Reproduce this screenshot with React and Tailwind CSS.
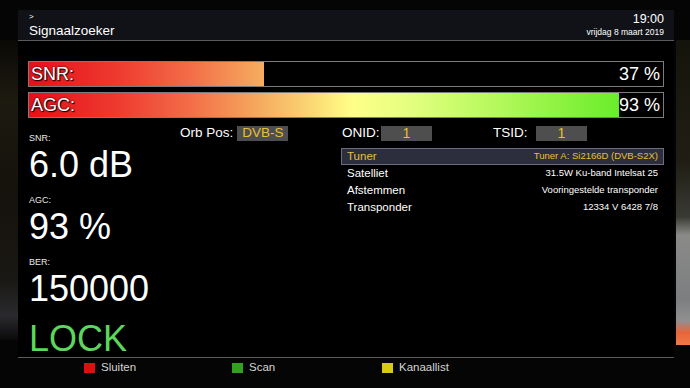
import React from "react";

const font = { fontFamily: '"Liberation Sans", Arial, sans-serif' };

function Bar({ label, value }) {
  return (
    <div className="relative h-[26px] w-[636px] border border-[#7c7c7c] bg-black">
      <div className="h-full overflow-hidden" style={{ width: `${value}%` }}>
        <div className="h-full w-[634px] bg-[linear-gradient(to_right,#e60f1a_0%,#ee3a30_14%,#f37048_26%,#f6ae60_37%,#fbd472_44%,#ffff88_51%,#e4ff80_60%,#b0f858_75%,#7cf036_88%,#52e81c_100%)]" />
      </div>
      <span className="absolute left-[2px] top-0 text-[18px] leading-[24px] text-white [text-shadow:0_0_2px_#000,1px_1px_1px_#000]">
        {label}
      </span>
      <span className="absolute right-[3px] top-0 text-[18px] leading-[24px] text-white [text-shadow:0_0_2px_#000,1px_1px_1px_#000]">
        {value} %
      </span>
    </div>
  );
}

function Stat({ label, value }) {
  return (
    <div className="flex flex-col">
      <div className="text-[9px] leading-[14px] text-[#e8e8e8]">{label}</div>
      <div className="text-[36px] leading-[40px] text-white">{value}</div>
    </div>
  );
}

function Row({ label, value, active }) {
  return (
    <div
      className={
        "flex h-[17px] items-center justify-between px-[5px] " +
        (active ? "border border-[#6c6e80] bg-[#2c2e3e]" : "border border-transparent")
      }
    >
      <span className={"text-[11.5px] " + (active ? "text-[#e8c030]" : "text-white")}>{label}</span>
      <span className={"text-[9.5px] " + (active ? "text-[#e8c030]" : "text-white")}>{value}</span>
    </div>
  );
}

function Key({ color, label }) {
  return (
    <div className="flex items-center gap-[6px]">
      <div className={"h-[10px] w-[11px] " + color} />
      <span className="text-[11.5px] text-[#d4d4d4]">{label}</span>
    </div>
  );
}

export default function App() {
  return (
    <div className="flex h-[388px] w-[690px] overflow-hidden bg-[#050505]" style={font}>
      <div className="w-[18px] pt-[40px]">
        <div className="h-[300px] w-full bg-[linear-gradient(to_bottom,#0a0905_0%,#1d1a10_20%,#15120c_50%,#1a1814_80%,#2a2a2e_92%,#0a0a0a_100%)]" />
      </div>
      <div className="flex w-[656px] flex-col pt-[10px]">
        <div className="flex h-[31px] items-start justify-between border-b border-[#5a5a5e] bg-[#111218] px-[10px]">
          <div className="flex flex-col pl-[1px]">
            <span className="mt-[3px] text-[8px] leading-[8px] text-white">&gt;</span>
            <span className="mt-[1px] text-[13.5px] leading-[18px] text-white">Signaalzoeker</span>
          </div>
          <div className="flex flex-col items-end">
            <span className="mt-[2px] text-[12.5px] leading-[14px] text-white">19:00</span>
            <span className="text-[8.5px] leading-[12px] text-white">vrijdag 8 maart 2019</span>
          </div>
        </div>
        <div className="flex h-[316px] flex-col bg-black px-[10px] pt-[20px]">
          <div className="flex flex-col gap-[5px]">
            <Bar label="SNR:" value={37} />
            <Bar label="AGC:" value={93} />
          </div>
          <div className="mt-[7px] flex">
            <div className="flex w-[152px] flex-col gap-[8px] pt-[6px] pl-[1px]">
              <Stat label="SNR:" value="6.0 dB" />
              <Stat label="AGC:" value="93 %" />
              <Stat label="BER:" value="150000" />
              <div className="mt-[2px] text-[36px] leading-[40px] text-[#5cd65c]">LOCK</div>
            </div>
            <div className="flex w-[161px] items-start">
              <div className="flex h-[16px] items-center gap-[4px]">
                <span className="text-[13.5px] text-white">Orb Pos:</span>
                <span className="flex h-[15px] w-[51px] items-center justify-center bg-[#4e4e4e] text-[13.5px] text-[#e8c030]">
                  DVB-S
                </span>
              </div>
            </div>
            <div className="flex w-[323px] flex-col">
              <div className="flex h-[16px] items-center">
                <span className="w-[40px] pl-[1px] text-[13.5px] text-white">ONID:</span>
                <span className="flex h-[15px] w-[51px] items-center justify-center bg-[#4e4e4e] text-[14px] text-[#e8c030]">
                  1
                </span>
                <span className="ml-[61px] w-[43px] text-[13.5px] text-white">TSID:</span>
                <span className="flex h-[15px] w-[51px] items-center justify-center bg-[#4e4e4e] text-[14px] text-[#e8c030]">
                  1
                </span>
              </div>
              <div className="mt-[7px] flex flex-col">
                <Row label="Tuner" value="Tuner A: Si2166D (DVB-S2X)" active />
                <Row label="Satelliet" value="31.5W Ku-band Intelsat 25" />
                <Row label="Afstemmen" value="Vooringestelde transponder" />
                <Row label="Transponder" value="12334 V 6428 7/8" />
              </div>
            </div>
          </div>
        </div>
        <div className="flex h-[31px] items-start border-t border-[#5a5a5a] pt-[1px]">
          <div className="ml-[66px] w-[148px]">
            <Key color="bg-[#dd1010]" label="Sluiten" />
          </div>
          <div className="w-[150px]">
            <Key color="bg-[#34a020]" label="Scan" />
          </div>
          <div>
            <Key color="bg-[#d8c818]" label="Kanaallist" />
          </div>
        </div>
      </div>
      <div className="w-[16px] pt-[40px]">
        <div className="ml-[2px] h-[305px] w-[14px] bg-[linear-gradient(to_bottom,#15140c_0%,#201e14_40%,#3a3a34_58%,#8a8a88_64%,#7c7e80_85%,#909090_92%,#e8643a_96%,#f07a48_100%)]" />
      </div>
    </div>
  );
}
